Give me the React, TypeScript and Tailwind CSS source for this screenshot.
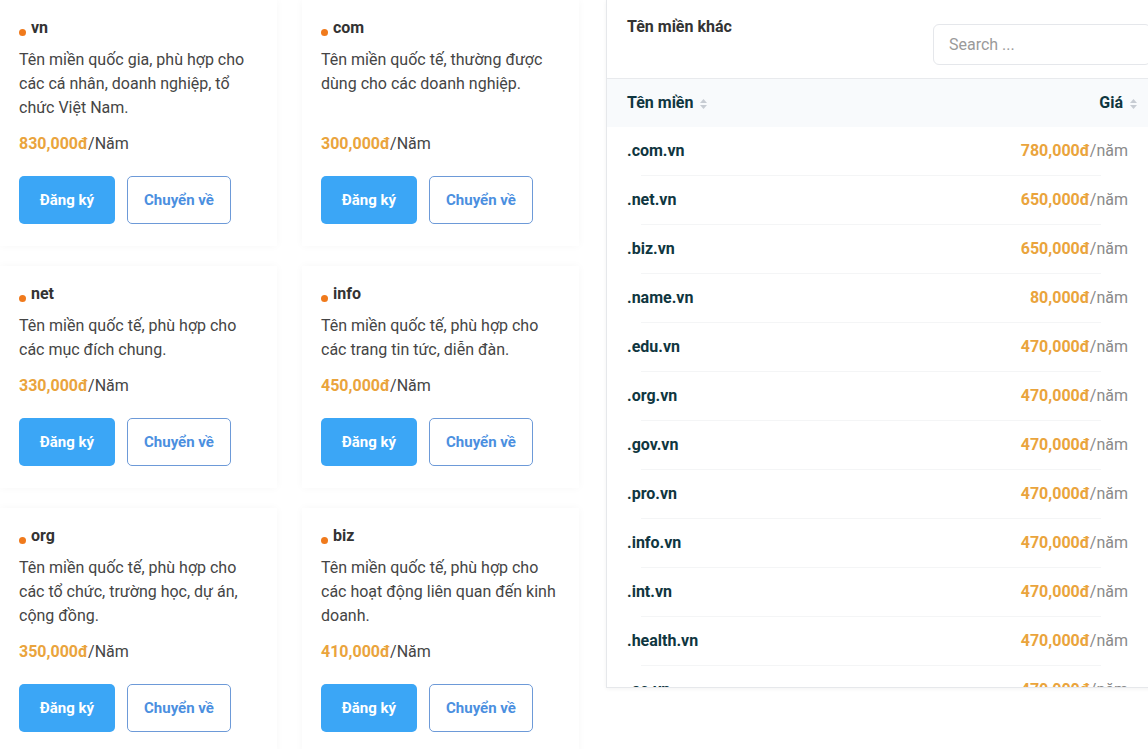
import React from "react";

const cards = [
  { name: "vn", desc: "Tên miền quốc gia, phù hợp cho các cá nhân, doanh nghiệp, tổ chức Việt Nam.", price: "830,000đ" },
  { name: "com", desc: "Tên miền quốc tế, thường được dùng cho các doanh nghiệp.", price: "300,000đ" },
  { name: "net", desc: "Tên miền quốc tế, phù hợp cho các mục đích chung.", price: "330,000đ" },
  { name: "info", desc: "Tên miền quốc tế, phù hợp cho các trang tin tức, diễn đàn.", price: "450,000đ" },
  { name: "org", desc: "Tên miền quốc tế, phù hợp cho các tổ chức, trường học, dự án, cộng đồng.", price: "350,000đ" },
  { name: "biz", desc: "Tên miền quốc tế, phù hợp cho các hoạt động liên quan đến kinh doanh.", price: "410,000đ" },
];

const rows = [
  [".com.vn", "780,000đ"],
  [".net.vn", "650,000đ"],
  [".biz.vn", "650,000đ"],
  [".name.vn", "80,000đ"],
  [".edu.vn", "470,000đ"],
  [".org.vn", "470,000đ"],
  [".gov.vn", "470,000đ"],
  [".pro.vn", "470,000đ"],
  [".info.vn", "470,000đ"],
  [".int.vn", "470,000đ"],
  [".health.vn", "470,000đ"],
  [".ac.vn", "470,000đ"],
];

function SortIcon() {
  return (
    <svg width="9" height="12" viewBox="0 0 9 12" className="ml-[6px] mt-[1px]">
      <path d="M4.5 1 L8 5 H1 Z" fill="#c7ccd3" />
      <path d="M4.5 11 L8 7 H1 Z" fill="#c7ccd3" />
    </svg>
  );
}

function Card({ name, desc, price }: { name: string; desc: string; price: string }) {
  return (
    <div className="flex flex-col bg-white px-[19px] pt-[16px] pb-[21px] shadow-[0_0_8px_rgba(0,0,0,0.035)]">
      <div className="flex items-center h-[24px]">
        <span className="w-[7px] h-[7px] rounded-full bg-[#f07a1c] mt-[9px] mr-[5px]" />
        <span className="text-[16px] font-bold text-[#333] leading-[24px]">{name}</span>
      </div>
      <p className="mt-[8px] flex-1 text-[16px] leading-[24px] text-[#454545]">{desc}</p>
      <div className="mt-[12px] text-[16px] leading-[24px] text-[#454545]">
        <span className="font-bold text-[#eaa43c]">{price}</span>/Năm
      </div>
      <div className="mt-[20px] mb-[1px] flex gap-[12px]">
        <button className="w-[96px] h-[48px] rounded-[5px] bg-[#3ba6f6] text-white text-[15px] font-bold">
          Đăng ký
        </button>
        <button className="w-[104px] h-[48px] rounded-[5px] border border-[#6d9ad8] bg-white text-[#4b8fdf] text-[15px] font-bold">
          Chuyển về
        </button>
      </div>
    </div>
  );
}

export default function App() {
  return (
    <div
      className="w-[1148px] h-[749px] overflow-hidden bg-white flex"
      style={{ fontFamily: "Roboto, 'Noto Sans', sans-serif" }}
    >
      <div className="grid grid-cols-[277px_277px] gap-x-[25px] gap-y-[20px] w-[579px] content-start">
        {cards.map((c) => (
          <Card key={c.name} {...c} />
        ))}
      </div>
      <div className="ml-[27px] w-[546px] shrink-0 h-[688px] flex flex-col border-x border-b border-[#e6e8eb] bg-white shadow-[0_1px_4px_rgba(0,0,0,0.05)]">
        <div className="h-[79px] shrink-0 flex justify-between px-[20px] border-b border-[#e8eaed]">
          <div className="pt-[16px] text-[16px] leading-[22px] font-bold text-[#333]">Tên miền khác</div>
          <div className="mt-[24px] w-[218px] h-[41px] rounded-[6px] border border-[#e5e7eb] flex items-center pl-[15px] text-[16px] text-[#9a9a9a] mr-[-20px]">
            Search ...
          </div>
        </div>
        <div className="h-[48px] shrink-0 bg-[#f8fafc] flex items-center justify-between pl-[20px] pr-[13px]">
          <div className="flex items-center text-[16px] font-bold text-[#0f3640]">
            Tên miền
            <SortIcon />
          </div>
          <div className="flex items-center text-[16px] font-bold text-[#0f3640]">
            Giá
            <SortIcon />
          </div>
        </div>
        <div className="flex-1 overflow-hidden">
          {rows.map(([d, p]) => (
            <div key={d}>
              <div className="h-[48px] flex items-center justify-between pl-[20px] pr-[23px] text-[16px]">
                <span className="font-bold text-[#0f3640]">{d}</span>
                <span>
                  <span className="font-bold text-[#eaa43c]">{p}</span>
                  <span className="text-[#8a8a8a]">/năm</span>
                </span>
              </div>
              <div className="h-px bg-[#f4f5f6] ml-[34px] mr-[50px]" />
            </div>
          ))}
        </div>
      </div>
    </div>
  );
}
